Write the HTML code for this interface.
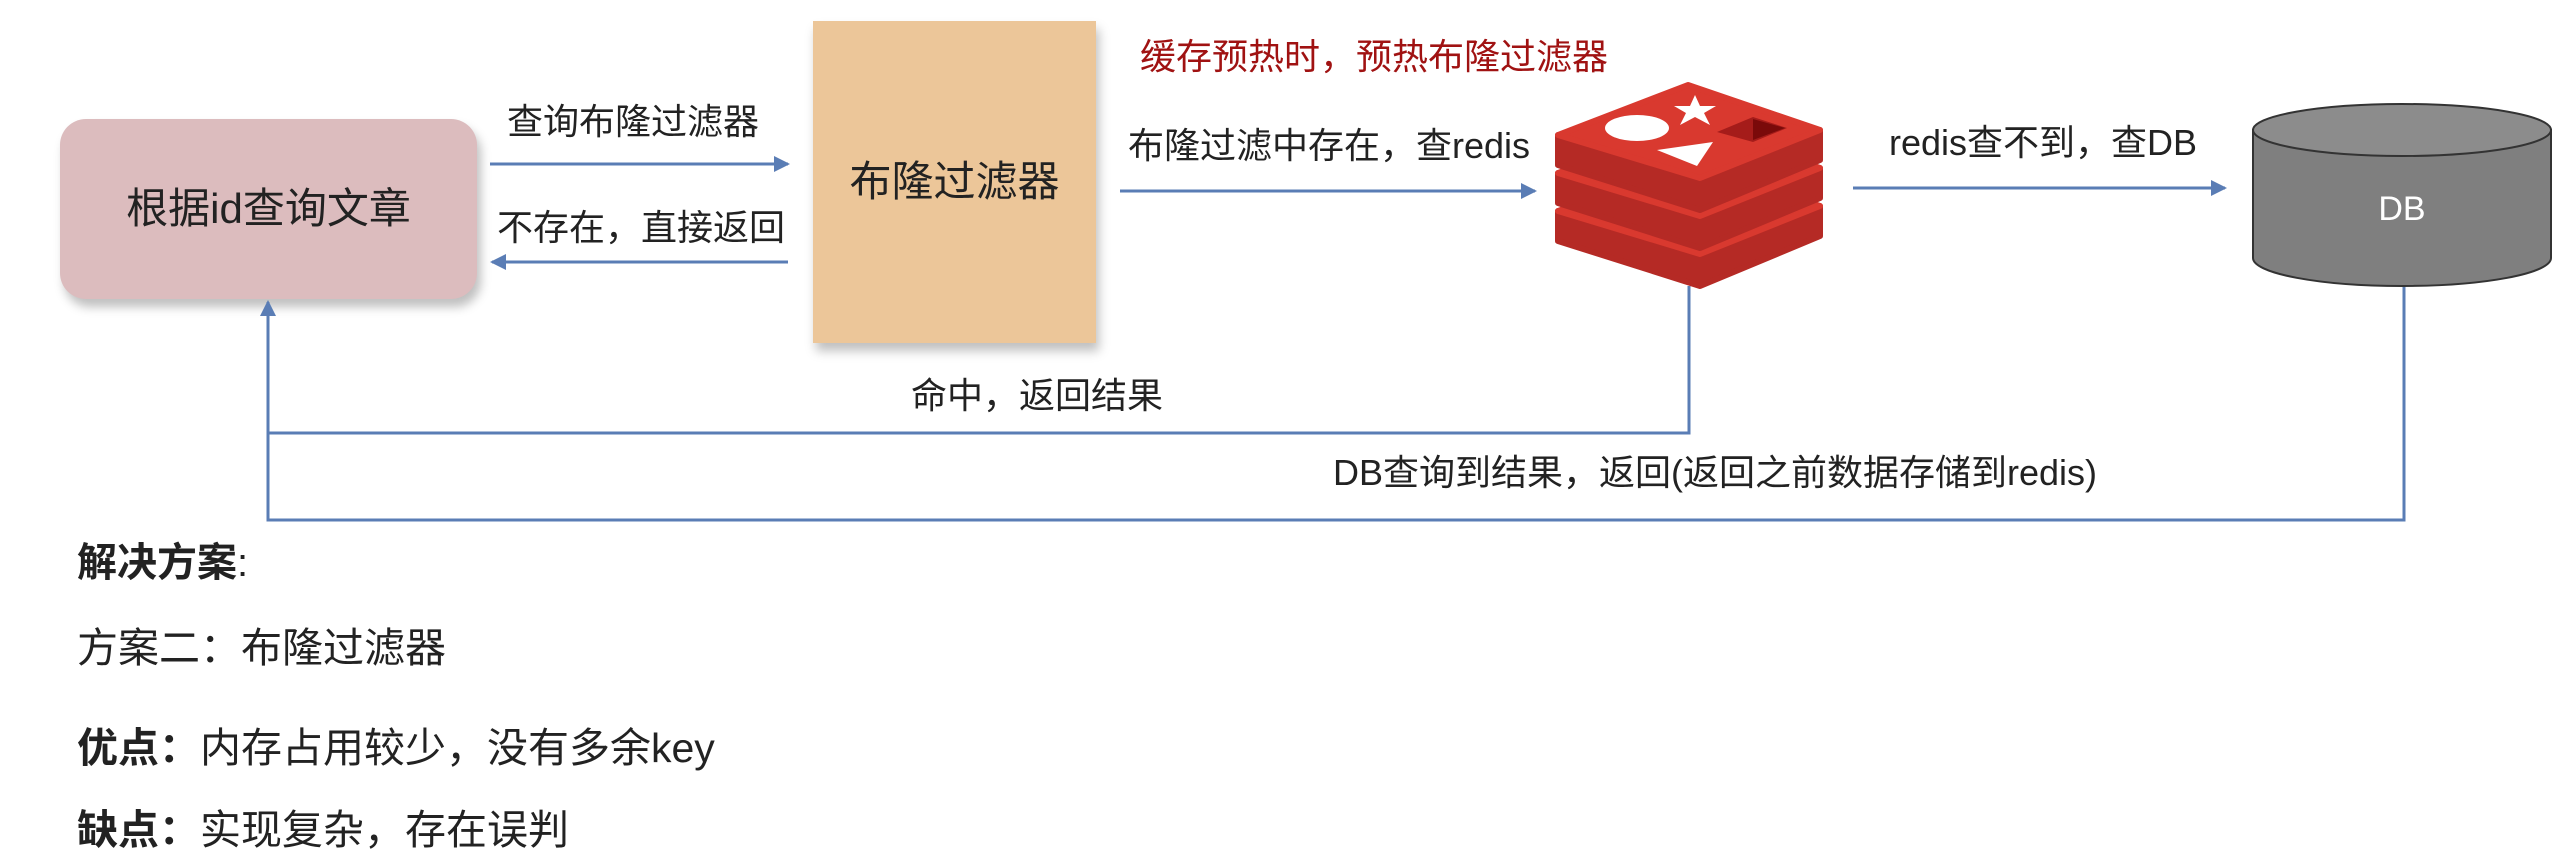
<!DOCTYPE html>
<html><head><meta charset="utf-8"><style>
body{margin:0;width:2564px;height:866px;background:#fff;position:relative;overflow:hidden;font-family:"Liberation Sans","Noto Sans CJK SC",sans-serif;color:#222}
.t{position:absolute;white-space:nowrap;line-height:1}
</style></head><body>
<div style="position:absolute;left:60px;top:119px;width:417px;height:180px;background:#dcbcbe;border-radius:26px;box-shadow:4px 8px 10px rgba(0,0,0,.25)"></div>
<div class="t" style="left:60px;width:417px;text-align:center;top:188px;font-size:42px">根据id查询文章</div>
<div style="position:absolute;left:813px;top:21px;width:283px;height:322px;background:#ecc699;box-shadow:3px 8px 10px rgba(0,0,0,.25)"></div>
<div class="t" style="left:813px;width:283px;text-align:center;top:161px;font-size:42px">布隆过滤器</div>
<svg width="2564" height="866" style="position:absolute;left:0;top:0">
<defs><marker id="a" markerWidth="18" markerHeight="18" refX="14" refY="9" orient="auto" markerUnits="userSpaceOnUse"><path d="M0,1L16,9L0,17z" fill="#5a7db5"/></marker></defs>
<g stroke="#5a7db5" stroke-width="3" fill="none">
<line x1="490" y1="164" x2="788" y2="164" marker-end="url(#a)"/>
<line x1="788" y1="262" x2="492" y2="262" marker-end="url(#a)"/>
<line x1="1120" y1="191" x2="1535" y2="191" marker-end="url(#a)"/>
<line x1="1853" y1="188" x2="2225" y2="188" marker-end="url(#a)"/>
<polyline points="1689,286 1689,433 268,433"/>
<polyline points="2404,268 2404,520 268,520 268,302" marker-end="url(#a)"/>
</g>
<g stroke-linejoin="round" stroke-width="6">
<path d="M1558,211 L1700,254 L1820,206 L1820,236 L1700,286 L1558,241Z" fill="#b52a25" stroke="#b52a25"/>
<path d="M1558,211 L1688,161 L1820,206 L1700,254Z" fill="#d9392f" stroke="#d9392f"/>
<path d="M1558,173 L1700,216 L1820,168 L1820,198 L1700,248 L1558,203Z" fill="#b52a25" stroke="#b52a25"/>
<path d="M1558,173 L1688,123 L1820,168 L1700,216Z" fill="#d9392f" stroke="#d9392f"/>
<path d="M1558,135 L1700,178 L1820,130 L1820,160 L1700,210 L1558,165Z" fill="#b52a25" stroke="#b52a25"/>
<path d="M1558,135 L1688,85 L1820,130 L1700,178Z" fill="#d9392f" stroke="#d9392f"/>
</g>
<ellipse cx="1637" cy="128" rx="32" ry="13" fill="#fff"/>
<path d="M1657,150 L1713,142 L1697,166Z" fill="#fff"/>
<path d="M1695,95 L1700,106 L1716,106 L1704,113 L1710,125 L1695,117 L1680,125 L1686,113 L1674,106 L1690,106Z" fill="#fff"/>
<path d="M1717,132 L1753,117 L1787,128 L1753,142Z" fill="#a51c1a"/>
<path d="M1753,119 L1785,128 L1753,140Z" fill="#7a0a0a"/>
<g>
<path d="M2253,130 L2253,258 A149,28 0 0 0 2551,258 L2551,130Z" fill="#7f7f7f" stroke="#333" stroke-width="2"/>
<ellipse cx="2402" cy="130" rx="149" ry="26" fill="#8c8c8c" stroke="#333" stroke-width="2"/>
</g>
</svg>
<div class="t" style="left:2253px;width:298px;text-align:center;top:192px;font-size:34px;color:#fff">DB</div>
<div class="t" style="left:507px;top:104px;font-size:36px">查询布隆过滤器</div>
<div class="t" style="left:497px;top:210px;font-size:36px">不存在，直接返回</div>
<div class="t" style="left:1140px;top:39px;font-size:36px;color:#a01212">缓存预热时，预热布隆过滤器</div>
<div class="t" style="left:1128px;top:128px;font-size:36px">布隆过滤中存在，查redis</div>
<div class="t" style="left:1889px;top:125px;font-size:36px">redis查不到，查DB</div>
<div class="t" style="left:911px;top:378px;font-size:36px">命中，返回结果</div>
<div class="t" style="left:1333px;top:455px;font-size:36px">DB查询到结果，返回(返回之前数据存储到redis)</div>
<div class="t" style="left:77px;top:543px;font-size:40px;font-weight:bold">解决方案<span style="font-weight:normal">:</span></div>
<div class="t" style="left:77px;top:628px;font-size:41px">方案二：布隆过滤器</div>
<div class="t" style="left:77px;top:728px;font-size:41px"><b>优点：</b>内存占用较少，没有多余key</div>
<div class="t" style="left:77px;top:810px;font-size:41px"><b>缺点：</b>实现复杂，存在误判</div>
</body></html>
